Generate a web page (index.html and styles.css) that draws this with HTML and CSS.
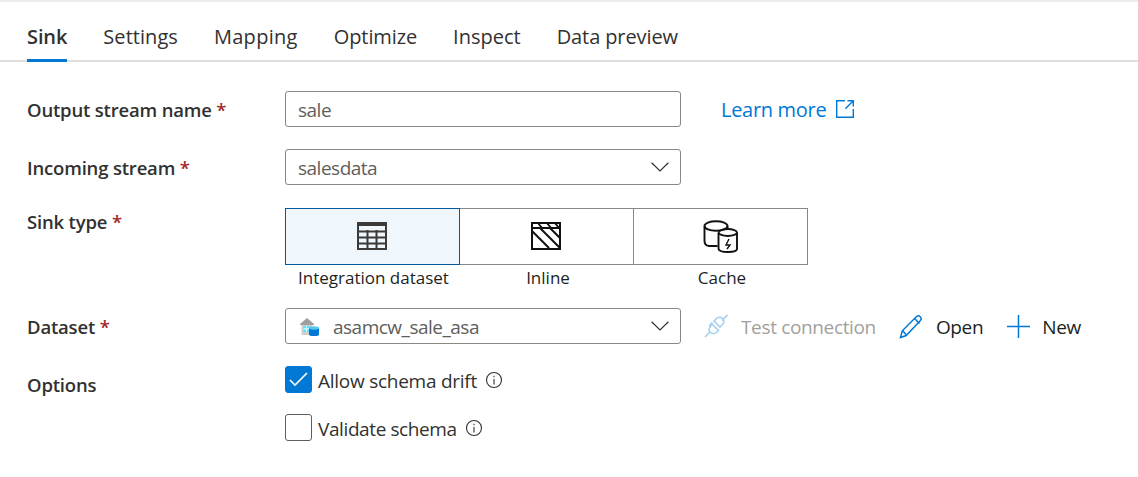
FILE: index.html
```html
<!DOCTYPE html>
<html lang="en">
<head>
<meta charset="utf-8">
<title>Sink</title>
<link rel="stylesheet" href="styles.css">
</head>
<body>
<div class="topline"></div>
<nav class="tabs">
  <a class="tab active">Sink</a>
  <a class="tab tab-settings">Settings</a>
  <a class="tab tab-mapping">Mapping</a>
  <a class="tab">Optimize</a>
  <a class="tab tab-inspect">Inspect</a>
  <a class="tab">Data preview</a>
</nav>
<main class="form">
  <div class="row row-first">
    <label class="label">Output stream name <span class="req">*</span></label>
    <div class="field"><span class="value">sale</span></div>
    <a class="learn">Learn more
      <svg class="ext" width="20" height="20" viewBox="0 0 20 20" fill="none" stroke="#0078d4" stroke-width="1.4"><path d="M10 1.7H1.7v16.6h16.6V10"/><path d="M12.5 1.7h5.8v5.8M18.3 1.7l-8 8"/></svg>
    </a>
  </div>
  <div class="row row-incoming">
    <label class="label">Incoming stream <span class="req">*</span></label>
    <div class="field"><span class="value">salesdata</span>
      <svg class="chev" width="18" height="10" viewBox="0 0 18 10" fill="none" stroke="#323130" stroke-width="1.2"><path d="M.6.8 9 9 17.4.8"/></svg>
    </div>
  </div>
  <div class="row-sink">
    <label class="label label-sink">Sink type <span class="req">*</span></label>
    <div class="tiles">
      <div class="tile selected">
        <div class="tile-box">
          <svg class="tile-icon" width="30" height="28" viewBox="0 0 30 28" fill="none" stroke="#3b3a39" stroke-width="2"><rect x="1" y="1" width="28" height="26"/><path d="M1 2.500h28" stroke-width="3"/><path d="M1 9.500h28M1 15.500h28M1 21.500h28M10.500 8v19M19.500 8v19"/></svg>
        </div>
        <span class="tile-cap">Integration dataset</span>
      </div>
      <div class="tile">
        <div class="tile-box">
          <svg class="tile-icon" width="30" height="28" viewBox="0 0 30 28" fill="none" stroke="#111" stroke-width="2"><rect x="1" y="1" width="28" height="26"/><path d="M1 6h28"/><path d="M1 9l17 17M9 6l20 20M19 6l10 10M7 1l4 5M16 1l4 5M24 1l4 5"/></svg>
        </div>
        <span class="tile-cap">Inline</span>
      </div>
      <div class="tile">
        <div class="tile-box">
          <svg width="35" height="33" viewBox="0 0 35 33" fill="none" stroke="#111" stroke-width="1.900"><path d="M14.500 26H6Q1.500 25.500 1.500 21V6.500"/><ellipse cx="13" cy="6" rx="11.500" ry="4.800"/><path d="M24.500 6v3"/><path d="M15.500 13V28.500Q15.500 32 25 32T34 28.500V13"/><ellipse cx="24.800" cy="12.500" rx="9.200" ry="3.500"/><path d="M26 19 23 25H27L24 29" stroke-width="1.400"/></svg>
        </div>
        <span class="tile-cap">Cache</span>
      </div>
    </div>
  </div>
  <div class="row row-dataset">
    <label class="label">Dataset <span class="req">*</span></label>
    <div class="field">
      <svg class="ds-icon" width="19" height="18" viewBox="0 0 19 18"><path d="M0 6 7 0l7 6v1H0z" fill="#a19f9d"/><path d="M1.500 7h11v10h-11z" fill="#d2d0ce"/><path d="M3.500 8h6v6h-6z" fill="#50e6ff"/><path d="M6 8h.8v6H6zM3.500 10.600h6v.8h-6z" fill="#fff"/><path d="M9 10h10v6.500Q19 18 14 18T9 16.500z" fill="#0078d4"/><ellipse cx="14" cy="10" rx="5" ry="1.700" fill="#50c8f0"/></svg>
      <span class="value">asamcw_sale_asa</span>
      <svg class="chev" width="18" height="10" viewBox="0 0 18 10" fill="none" stroke="#323130" stroke-width="1.2"><path d="M.6.8 9 9 17.4.8"/></svg>
    </div>
    <div class="actions">
      <a class="action disabled">
        <svg width="24" height="24" viewBox="0 0 24 24" fill="none" stroke="#a6d0f0" stroke-width="1.600"><path d="M1 23l5.500-5.500M23.500 1 18 6.500"/><path d="M7.500 9.500l7 7-2 2q-3 2.500-6 0t0-6z"/><path d="M10 7l2.500-2.500q3-2.500 6 0t0 6L16 13zM5 12l3.500-3.500"/></svg>
        <span class="action-text">Test connection</span>
      </a>
      <a class="action act-open">
        <svg width="24" height="25" viewBox="0 0 24 25" fill="none" stroke="#0078d4" stroke-width="1.500"><path d="M1.500 23.500 3.300 16.800 17.500 2.500q1.800-1.500 3.700.2t.2 3.700L7.200 21.500z"/><path d="M15.500 4.500l5 5M3.500 16.500l4 4.500"/></svg>
        <span class="action-text">Open</span>
      </a>
      <a class="action act-new">
        <svg width="23" height="23" viewBox="0 0 23 23" stroke="#0078d4" stroke-width="1.500"><path d="M11.500 0v23M0 11.500h23"/></svg>
        <span class="action-text">New</span>
      </a>
    </div>
  </div>
  <div class="row-options">
    <label class="label label-options">Options</label>
    <div class="checks">
      <div class="check-row">
        <span class="box checked"><svg width="19" height="15" viewBox="0 0 19 15" fill="none" stroke="#fff" stroke-width="1.600"><path d="M1 8l5 5L18 1"/></svg></span>
        <span class="check-text">Allow schema drift</span>
        <svg class="info" width="18" height="18" viewBox="0 0 18 18" fill="none" stroke="#323130" stroke-width="1.100"><circle cx="9" cy="9" r="7.500"/><path d="M9 8v5.500M9 4.800v1.400"/></svg>
      </div>
      <div class="check-row">
        <span class="box"></span>
        <span class="check-text check-text-tight">Validate schema</span>
        <svg class="info" width="18" height="18" viewBox="0 0 18 18" fill="none" stroke="#323130" stroke-width="1.100"><circle cx="9" cy="9" r="7.500"/><path d="M9 8v5.500M9 4.800v1.400"/></svg>
      </div>
    </div>
  </div>
</main>
</body>
</html>
```
FILE: styles.css
```css
* { box-sizing: border-box; }
html, body { margin: 0; padding: 0; }
body {
  width: 1138px;
  height: 477px;
  background: #fff;
  color: #323130;
  font-family: "Open Sans", "Noto Sans", sans-serif;
  font-size: 19px;
  overflow: hidden;
}
.topline { height: 2px; background: #edebe9; }
.tabs {
  display: flex;
  gap: 36px;
  height: 60px;
  padding: 0 27px;
  border-bottom: 2px solid #e1dfdd;
}
.tab {
  height: 60px;
  line-height: 69px;
  font-size: 20px;
  letter-spacing: -0.1px;
  color: #323130;
  white-space: nowrap;
}
.tab-settings { letter-spacing: 0.05px; }
.tab-mapping { letter-spacing: 0.3px; }
.tab-inspect { letter-spacing: 0; }
.tab.active {
  font-weight: 600;
  border-bottom: 3px solid #0078d4;
}
.form { padding-left: 27px; }
.row { display: flex; align-items: center; height: 36px; }
.row-first { margin-top: 29px; }
.row-incoming { margin-top: 22px; }
.label {
  flex: 0 0 258px;
  font-size: 18.500px;
  font-weight: 600;
  letter-spacing: -0.18px;
  color: #323130;
}
.req { color: #a4262c; }
.field {
  display: flex;
  align-items: center;
  flex: 0 0 396px;
  height: 36px;
  padding: 0 11px 0 12px;
  border: 1px solid #8a8886;
  border-radius: 3px;
}
.value {
  flex: 1;
  padding-top: 2px;
  font-size: 19px;
  letter-spacing: -0.5px;
  color: #605e5c;
}
.chev { flex: none; }
.learn {
  display: flex;
  align-items: center;
  gap: 9px;
  margin-left: 40px;
  font-size: 20px;
  letter-spacing: -0.3px;
  color: #0078d4;
}
.row-sink { display: flex; margin-top: 23px; }
.label-sink { padding-top: 1px; line-height: 26px; }
.tiles { display: flex; }
.tile {
  display: flex;
  flex-direction: column;
  align-items: center;
  width: 174px;
}
.tile:first-child { width: 175px; }
.tile-box {
  display: flex;
  align-items: center;
  justify-content: center;
  width: 100%;
  height: 57px;
  border: 1px solid #8a8886;
  border-left-width: 0;
}
.tile:first-child .tile-box { border-left-width: 1px; }
.tile.selected .tile-box { background: #eff6fc; border-color: #005a9e; }
.tile-icon { margin: 0 1px 1px 0; }
.tile-cap {
  margin-left: 2px;
  line-height: 26px;
  font-size: 17px;
  letter-spacing: 0;
  color: #201f1e;
  white-space: nowrap;
}
.row-dataset { margin-top: 17px; }
.ds-icon { flex: none; margin: 1px 14px 0 2px; }
.actions { display: flex; align-items: center; margin-left: 23px; }
.action {
  display: flex;
  align-items: center;
  font-size: 19px;
  letter-spacing: -0.35px;
  color: #201f1e;
  white-space: nowrap;
}
.action-text { padding-top: 2px; }
.action.disabled { gap: 13px; color: #a19f9d; }
.act-open { gap: 13px; margin-left: 23px; }
.act-new { gap: 12px; margin-left: 24px; }
.row-options { display: flex; margin-top: 22px; }
.label-options { padding-top: 5px; line-height: 28px; }
.checks { display: flex; flex-direction: column; gap: 21px; }
.check-row { display: flex; align-items: center; height: 27px; }
.box {
  display: flex;
  align-items: center;
  justify-content: center;
  width: 27px;
  height: 27px;
  margin-right: 6px;
  border: 1px solid #605e5c;
  border-radius: 3px;
}
.box.checked { background: #0078d4; border-color: #0078d4; }
.check-text { padding-top: 2px; font-size: 19px; letter-spacing: -0.26px; color: #323130; }
.check-text-tight { letter-spacing: -0.4px; }
.info { margin-left: 8px; }
```
